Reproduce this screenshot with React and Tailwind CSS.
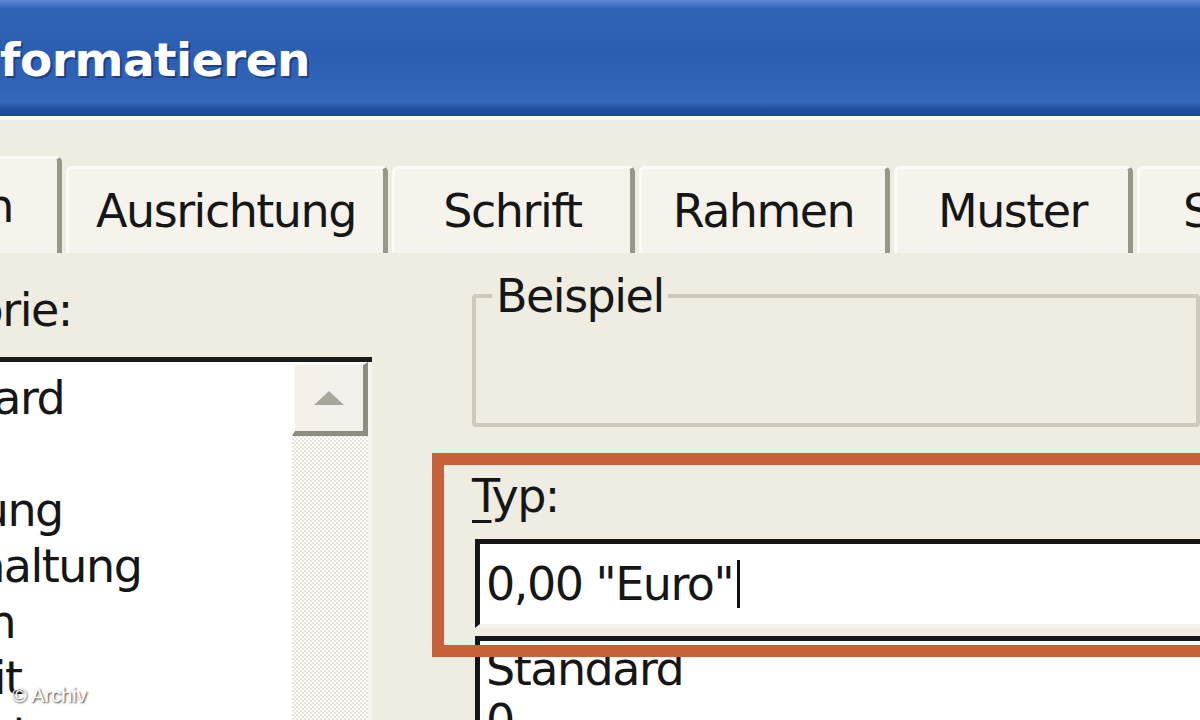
import React from "react";

const tabs = [
  { label: "Zahlen", w: "w-[262px]", first: true },
  { label: "Ausrichtung", w: "w-[322px]" },
  { label: "Schrift", w: "w-[243px]" },
  { label: "Rahmen", w: "w-[251px]" },
  { label: "Muster", w: "w-[239px]" },
  { label: "Schutz", w: "w-[240px]" },
];

const categories = ["Standard", "Zahl", "Währung", "Buchhaltung", "Datum", "Uhrzeit", "Prozent", "Bruch"];

const App = () => {
  return (
    <div className="relative w-[1200px] h-[720px] overflow-hidden bg-[#efece1] font-['DejaVu_Sans',sans-serif] text-[46px] tracking-[-1.5px] text-[#161616]">
      {/* Title bar */}
      <div className="h-[116px] bg-[linear-gradient(to_bottom,#5d8ad6_0%,#3163b6_7%,#2b5db1_45%,#3264b8_78%,#3768bb_88%,#214f9f_94%,#1a4798_100%)]">
        <div className="pt-[36px] font-['DejaVu_Sans',sans-serif] text-[47px] font-bold leading-none tracking-[-0.5px] text-white [text-shadow:2px_2px_0_#1c3f86]">
          formatieren
        </div>
      </div>
      <div className="h-[4px] bg-[#f9f7f2]" />

      {/* Tabs */}
      <div className="mt-[36px] flex items-end ml-[-200px]">
        {tabs.map((t, idx) => (
          <div
            key={idx}
            className={`${t.w} shrink-0 mr-[4px] flex items-center rounded-t-[6px] border-t-[3px] border-l-[3px] border-r-[5px] border-t-[#fbfaf6] border-l-[#fbfaf6] border-r-[#98958a] bg-[#f5f3ec] leading-none ${
              t.first ? "justify-end pr-[44px] h-[97px]" : "justify-center h-[87px]"
            }`}
          >
            {t.label}
          </div>
        ))}
      </div>

      {/* Panel */}
      <div className="flex">
        {/* Left column: Kategorie */}
        <div className="ml-[-150px] w-[522px] shrink-0">
          <div className="mt-[34px] leading-none">Kategorie:</div>
          <div className="mt-[24px] flex h-[400px] border-t-[5px] border-l-[5px] border-[#1b1b1b] bg-white">
            <div className="flex-1 pl-[12px] pt-[8px]">
              {categories.map((c) => (
                <div key={c} className="h-[56px] leading-[56px]">
                  {c}
                </div>
              ))}
            </div>
            <div className="w-[80px] border-r-[4px] border-[#f6f4ee] bg-[repeating-conic-gradient(#ffffff_0_25%,#e6e3d8_0_50%)] bg-size-[4px_4px]">
              <div className="flex h-[74px] items-center justify-center border-t-[3px] border-l-[3px] border-r-[5px] border-b-[5px] border-t-[#fdfcf9] border-l-[#fdfcf9] border-r-[#8e8b80] border-b-[#8e8b80] bg-[#f2f0e8]">
                <svg width="32" height="16" viewBox="0 0 32 16">
                  <path d="M16 1 L31 15 L1 15 Z" fill="#a9a799" />
                </svg>
              </div>
            </div>
          </div>
        </div>

        {/* Right column */}
        <div className="ml-[100px] flex-1">
          <fieldset className="mt-[20px] h-[154px] rounded-[4px] border-[4px] border-[#cdcabd] pl-[16px]">
            <legend className="px-[4px] leading-none">Beispiel</legend>
          </fieldset>

          <div className="mt-[46px] leading-none">
            <span className="underline decoration-[3px] underline-offset-[8px]">T</span>yp:
          </div>
          <div className="mt-[20px] ml-[3px] flex h-[89px] items-center border-t-[5px] border-l-[5px] border-b-[4px] border-t-[#161616] border-l-[#161616] border-b-[#f4f3ef] bg-white pl-[6px]">
            <span className="leading-none">0,00 "Euro"</span>
            <span className="ml-[4px] h-[48px] w-[3px] bg-[#111]" />
          </div>
          <div className="mt-[8px] ml-[3px] h-[200px] border-t-[5px] border-l-[5px] border-[#161616] bg-white pl-[6px] pt-[2px]">
            <div className="h-[52px] leading-[52px]">Standard</div>
            <div className="h-[52px] leading-[52px]">0</div>
          </div>
        </div>
      </div>

      {/* Highlight frame */}
      <div className="absolute left-[432px] top-[453px] h-[204px] w-[820px] border-[12px] border-[#c6623a]" />

      {/* Watermark */}
      <div className="absolute left-[12px] bottom-[10px] font-['Liberation_Sans',sans-serif] text-[20px] tracking-normal text-white [text-shadow:1px_1px_2px_#333]">
        © Archiv
      </div>
    </div>
  );
};

export default App;
